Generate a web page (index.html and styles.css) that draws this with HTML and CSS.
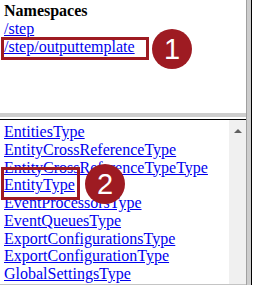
FILE: index.html
```html
<!DOCTYPE html>
<html>
<head>
<meta charset="utf-8">
<link rel="stylesheet" href="styles.css">
</head>
<body>
<div class="window">
  <div class="frames">
    <div class="top-frame">
      <div class="title">Namespaces</div>
      <a class="link" href="#">/step</a>
      <div class="marked-row">
        <a class="link" href="#">/step/outputtemplate</a>
        <span class="box box-one"></span>
        <span class="badge badge-one">1</span>
      </div>
    </div>
    <div class="splitter"></div>
    <div class="bottom-frame">
      <div class="list">
        <a class="link" href="#">EntitiesType</a>
        <a class="link" href="#">EntityCrossReferenceType</a>
        <a class="link" href="#">EntityCrossReferenceTypeType</a>
        <div class="marked-row">
          <a class="link" href="#">EntityType</a>
          <span class="box box-two"></span>
          <span class="badge badge-two">2</span>
        </div>
        <a class="link" href="#">EventProcessorsType</a>
        <a class="link" href="#">EventQueuesType</a>
        <a class="link" href="#">ExportConfigurationsType</a>
        <a class="link" href="#">ExportConfigurationType</a>
        <a class="link" href="#">GlobalSettingsType</a>
      </div>
      <div class="scrollbar">
        <span class="arrow-up"></span>
      </div>
    </div>
  </div>
  <div class="side">
    <div class="side-gray"></div>
    <div class="side-black"></div>
    <div class="side-white"></div>
  </div>
</div>
</body>
</html>
```
FILE: styles.css
```css
html, body {
  margin: 0;
  padding: 0;
  background: #ffffff;
  overflow: hidden;
}
.window {
  width: 254px;
  height: 285px;
  display: flex;
  font-family: "Liberation Serif", "Times New Roman", serif;
  font-size: 16px;
  color: #000;
}
.frames {
  width: 246px;
  height: 285px;
  display: flex;
  flex-direction: column;
}
.top-frame {
  height: 113px;
  padding: 2px 0 0 4px;
  box-sizing: border-box;
  display: flex;
  flex-direction: column;
  align-items: flex-start;
  line-height: 18px;
  background: #fff;
}
.title {
  font-weight: bold;
}
.link {
  color: #0000ee;
  text-decoration: underline;
}
.marked-row {
  position: relative;
}
.box {
  position: absolute;
  border: 3px solid #9e1b22;
  box-sizing: border-box;
}
.box-one {
  left: -3px;
  top: -1px;
  width: 148px;
  height: 23px;
}
.box-two {
  left: -3px;
  top: -9px;
  width: 79px;
  height: 33px;
}
.badge {
  position: absolute;
  width: 40px;
  height: 40px;
  border-radius: 50%;
  background: #9e1b22;
  color: #fff;
  font-family: "Liberation Sans", Arial, sans-serif;
  font-size: 29px;
  line-height: 40px;
  text-align: center;
}
.badge-one {
  left: 148px;
  top: -9px;
}
.badge-two {
  left: 81px;
  top: -12px;
}
.splitter {
  height: 4px;
  background: #cdcdcd;
  border-bottom: 2px solid #ffffff;
}
.bottom-frame {
  flex: 1;
  border-top: 1px solid #000;
  display: flex;
  overflow: hidden;
  border-bottom: 1px solid #c4c4c4;
}
.list {
  flex: 1;
  padding: 3px 0 0 4px;
  display: flex;
  flex-direction: column;
  align-items: flex-start;
  white-space: nowrap;
  line-height: 17.75px;
}
.scrollbar {
  width: 17px;
  background: #f0f0f0;
  display: flex;
  justify-content: center;
  padding-top: 9px;
  box-sizing: border-box;
}
.arrow-up {
  width: 0;
  height: 0;
  border-left: 4px solid transparent;
  border-right: 4px solid transparent;
  border-bottom: 4px solid #606060;
}
.side {
  display: flex;
  height: 285px;
}
.side-gray {
  width: 5px;
  background: #cdcdcd;
  border-left: 1px solid #a0a0a0;
  box-sizing: border-box;
}
.side-black {
  width: 1px;
  background: #000;
}
.side-white {
  width: 2px;
  background: #fff;
}
```
